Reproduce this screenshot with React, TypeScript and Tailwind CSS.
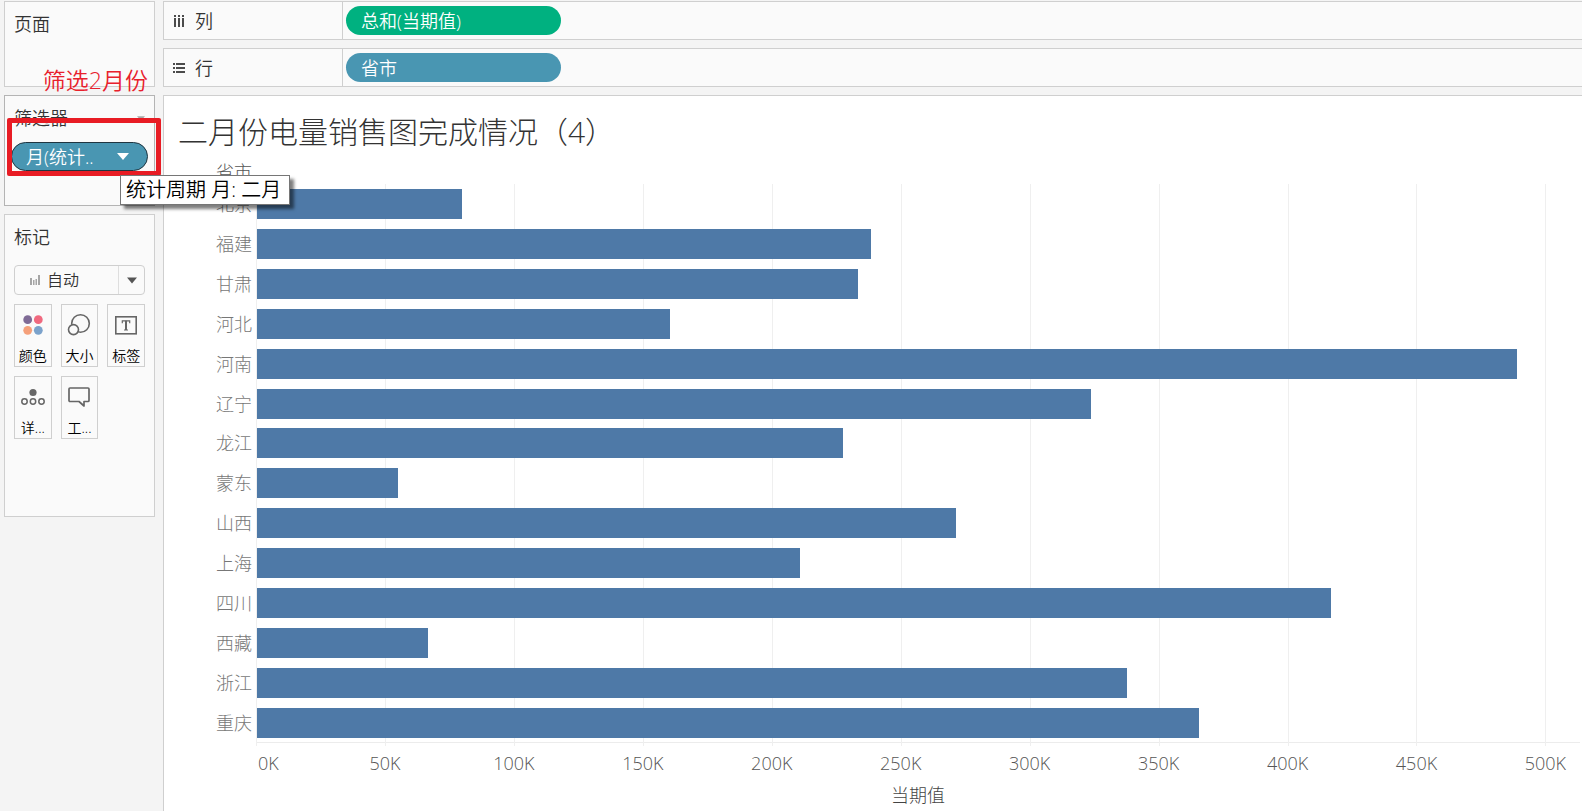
import type { ReactNode } from 'react';

type Bar = { name: string; value: number };

const AXIS_MAX = 513.4;

const bars: Bar[] = [
  { name: '北京', value: 79.6 },
  { name: '福建', value: 238.2 },
  { name: '甘肃', value: 233.2 },
  { name: '河北', value: 160.2 },
  { name: '河南', value: 488.9 },
  { name: '辽宁', value: 323.6 },
  { name: '龙江', value: 227.4 },
  { name: '蒙东', value: 54.7 },
  { name: '山西', value: 271.2 },
  { name: '上海', value: 210.7 },
  { name: '四川', value: 416.7 },
  { name: '西藏', value: 66.3 },
  { name: '浙江', value: 337.6 },
  { name: '重庆', value: 365.5 },
];

const ticks = [0, 50, 100, 150, 200, 250, 300, 350, 400, 450, 500];

const percent = (value: number) => `${(value / AXIS_MAX) * 100}%`;

function ColumnsIcon() {
  return (
    <svg width="12" height="12" viewBox="0 0 12 12" fill="#4b4b4b" aria-hidden="true">
      <path d="M1 0h2v2H1zM5 0h2v2H5zM9 0h2v2H9zM1 3h2v9H1zM5 3h2v9H5zM9 3h2v9H9z" />
    </svg>
  );
}

function RowsIcon() {
  return (
    <svg width="12" height="12" viewBox="0 0 12 12" fill="#4b4b4b" aria-hidden="true">
      <path d="M0 1h2v2H0zM0 5h2v2H0zM0 9h2v2H0zM3 1h9v2H3zM3 5h9v2H3zM3 9h9v2H3z" />
    </svg>
  );
}

function ColorIcon() {
  return (
    <svg width="24" height="24" viewBox="0 0 24 24" aria-hidden="true">
      <circle cx="6.7" cy="6.7" r="4.4" fill="#7f6b96" />
      <circle cx="17.3" cy="6.7" r="4.4" fill="#f0697f" />
      <circle cx="6.7" cy="17.3" r="4.4" fill="#f5a07a" />
      <circle cx="17.3" cy="17.3" r="4.4" fill="#7ba2cb" />
    </svg>
  );
}

function SizeIcon() {
  return (
    <svg width="24" height="24" viewBox="0 0 24 24" fill="#fafafa" stroke="#666" strokeWidth="1.6" aria-hidden="true">
      <circle cx="13.5" cy="10.5" r="8.8" />
      <circle cx="6.5" cy="16.6" r="5" />
    </svg>
  );
}

function LabelIcon() {
  return (
    <svg width="24" height="24" viewBox="0 0 24 24" fill="none" stroke="#666" aria-hidden="true">
      <rect x="1.8" y="3.8" width="20.4" height="17" strokeWidth="1.6" />
      <path d="M8.3 10.200V7.900h7.400v2.300M10 17h4" strokeWidth="1.2" />
      <path d="M12 7.800v9.200" strokeWidth="2" />
    </svg>
  );
}

function DetailIcon() {
  return (
    <svg width="24" height="24" viewBox="0 0 24 24" fill="none" stroke="#666" strokeWidth="1.5" aria-hidden="true">
      <circle cx="12" cy="7.5" r="3.6" fill="#666" stroke="none" />
      <circle cx="3.5" cy="16.5" r="2.7" />
      <circle cx="12" cy="16.5" r="2.7" />
      <circle cx="20.5" cy="16.5" r="2.7" />
    </svg>
  );
}

function TooltipIcon() {
  return (
    <svg width="24" height="24" viewBox="0 0 24 24" fill="none" stroke="#666" strokeWidth="1.7" strokeLinejoin="round" aria-hidden="true">
      <path d="M3 3h18a1 1 0 0 1 1 1v11.500a1 1 0 0 1-1 1h-4V21l-5-4.500H3a1 1 0 0 1-1-1V4a1 1 0 0 1 1-1z" />
    </svg>
  );
}

function Caret({ className }: { className: string }) {
  return (
    <svg width="12" height="7" viewBox="0 0 12 7" className={className} fill="currentColor" aria-hidden="true">
      <path d="M0 0h12L6 7z" />
    </svg>
  );
}

function Shelf({ icon, label, children }: { icon: ReactNode; label: string; children: ReactNode }) {
  return (
    <section className="flex h-[39px] border border-r-0 border-[#cfcfcf] bg-[#fafafa]">
      <h2 className="flex w-[179px] shrink-0 items-center gap-2.5 border-r border-[#cfcfcf] pl-[9px] text-lg leading-6">
        {icon}
        {label}
      </h2>
      <div className="flex items-center pl-[3px]">{children}</div>
    </section>
  );
}

function MarkButton({ icon, label }: { icon: ReactNode; label: string }) {
  return (
    <button
      type="button"
      className="flex h-[63px] flex-col items-center justify-between border border-[#cfcfcf] pt-2 text-sm leading-5 whitespace-nowrap text-black"
    >
      {icon}
      {label}
    </button>
  );
}

function Sidebar() {
  return (
    <aside className="flex w-[151px] shrink-0 flex-col gap-2">
      <section className="relative h-[86px] border border-[#cfcfcf] bg-[#fafafa] px-[9px] py-2.5">
        <h2 className="text-lg leading-6">页面</h2>
        <p className="absolute right-1.5 -bottom-2 text-[23px] leading-7 whitespace-nowrap text-[#e8202c]">筛选2月份</p>
      </section>

      <section className="relative h-[111px] border border-[#b4b4b4] bg-[#fafafa] pt-2.5">
        <div className="flex items-center justify-between px-[9px]">
          <h2 className="text-lg leading-6">筛选器</h2>
          <Caret className="w-2 text-[#a8a8a8]" />
        </div>
        <button
          type="button"
          className="mt-3 ml-1.5 flex h-[29px] w-[137px] items-center justify-between rounded-full border border-[#1f3540] bg-[#4996b2] pr-[18px] pl-3.5 text-lg leading-6 text-white"
        >
          月(统计..
          <Caret className="" />
        </button>
        <div className="absolute top-[22px] left-0.5 h-[58px] w-[154px] rounded-xs border-[5px] border-[#e81c24]" />
        <div
          role="tooltip"
          className="absolute top-[79px] left-[115px] z-10 border border-[#767676] bg-white pr-2 pl-[5px] text-xl leading-7 whitespace-nowrap text-black shadow-[4px_4px_3px_rgba(0,0,0,0.5)]"
        >
          统计周期 月: 二月
        </div>
      </section>

      <section className="flex h-[303px] flex-col border border-[#cfcfcf] bg-[#fafafa] px-[9px] pt-2.5">
        <h2 className="text-lg leading-6">标记</h2>
        <button
          type="button"
          className="mt-4 flex h-[30px] items-center rounded-sm border border-[#cfcfcf] text-base leading-6"
        >
          <svg width="10" height="10" viewBox="0 0 10 10" className="mr-[7px] ml-[15px]" fill="#a6a6a6" aria-hidden="true">
            <path d="M0 3h2v7H0zM3 5h1.500v5H3zM5.500 4h1.500v6H5.500zM8 0h2v10H8z" />
          </svg>
          自动
          <span className="ml-auto flex h-full w-[26px] items-center justify-center border-l border-[#dedede]">
            <Caret className="w-2.5 text-[#555]" />
          </span>
        </button>
        <div className="mt-[9px] grid grid-cols-3 gap-[9px]">
          <MarkButton icon={<ColorIcon />} label="颜色" />
          <MarkButton icon={<SizeIcon />} label="大小" />
          <MarkButton icon={<LabelIcon />} label="标签" />
          <MarkButton icon={<DetailIcon />} label="详..." />
          <MarkButton icon={<TooltipIcon />} label="工..." />
        </div>
      </section>
    </aside>
  );
}

function BarChart() {
  return (
    <div className="flex grow flex-col pr-0.5">
      <div className="relative flex grow flex-col">
        <div className="absolute inset-y-0 right-0 left-[92px] border-b border-[#ececec]">
          {ticks.map((tick) => (
            <div key={tick} className="absolute top-0 -bottom-1 w-px bg-[#efefef]" style={{ left: percent(tick) }} />
          ))}
        </div>
        {bars.map((bar) => (
          <div key={bar.name} className="relative flex flex-1 items-center">
            <span className="w-[93px] shrink-0 pr-[5px] text-right text-lg leading-6 font-light text-[#777]">
              {bar.name}
            </span>
            <div className="grow">
              <div className="h-[30px] bg-[#4e79a7]" style={{ width: percent(bar.value) }} />
            </div>
          </div>
        ))}
      </div>
      <div className="relative mt-2 ml-[92px] h-6 text-lg leading-6 font-light text-[#555]">
        {ticks.map((tick) => (
          <span
            key={tick}
            className={tick === 0 ? 'absolute left-0.5' : 'absolute -translate-x-1/2'}
            style={tick === 0 ? undefined : { left: percent(tick) }}
          >
            {tick}K
          </span>
        ))}
      </div>
      <p className="mt-2 mb-1 ml-[92px] text-center text-lg leading-6 font-light text-[#444]">当期值</p>
    </div>
  );
}

export default function App() {
  return (
    <div className="flex min-h-screen gap-2 bg-[#f4f4f4] pt-px pl-1 font-['Open_Sans','Noto_Sans_CJK_SC',sans-serif] font-[350] text-[#333]">
      <Sidebar />
      <div className="flex min-w-0 grow flex-col gap-2">
        <Shelf icon={<ColumnsIcon />} label="列">
          <button type="button" className="h-[29px] w-[215px] rounded-full bg-[#00b180] pl-[15px] text-left text-lg leading-6 text-white">
            总和(当期值)
          </button>
        </Shelf>
        <Shelf icon={<RowsIcon />} label="行">
          <button type="button" className="h-[29px] w-[215px] rounded-full bg-[#4996b2] pl-[15px] text-left text-lg leading-6 text-white">
            省市
          </button>
        </Shelf>
        <main className="flex grow flex-col border-t border-l border-[#cfcfcf] bg-white pt-4">
          <h1 className="pl-3.5 text-[30px] leading-10 font-light">二月份电量销售图完成情况（4）</h1>
          <p className="mt-2 w-[93px] pr-[5px] text-right text-lg leading-6 font-light text-[#555]">省市</p>
          <BarChart />
        </main>
      </div>
    </div>
  );
}
